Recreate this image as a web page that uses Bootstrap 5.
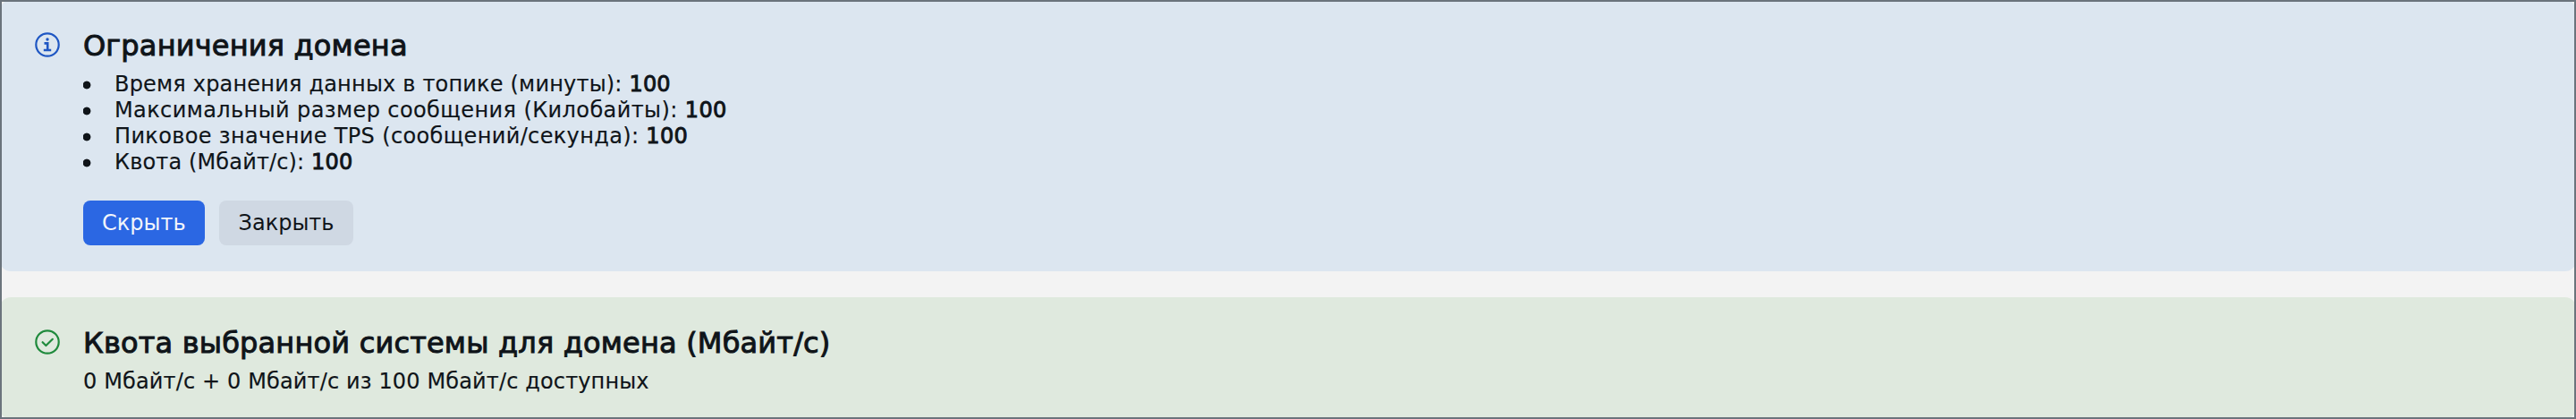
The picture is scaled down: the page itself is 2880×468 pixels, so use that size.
<!DOCTYPE html>
<html lang="ru">
<head>
<meta charset="utf-8">
<title>Ограничения домена</title>
<link href="https://cdn.jsdelivr.net/npm/bootstrap@5.3.0/dist/css/bootstrap.min.css" rel="stylesheet">
<style>
html,body{height:100%;margin:0;background:#f3f3f3;overflow:hidden}
body{font-family:"DejaVu Sans","Noto Sans",sans-serif;color:#0f1419}
.frame{height:468px;outline:2px solid #6b747c;outline-offset:-2px;overflow:hidden;display:flex;flex-direction:column;gap:29px}
.note{border-radius:12px;padding:32px 39px 29px;display:flex;gap:26px;font-size:24px;line-height:29px;letter-spacing:.14px;-webkit-text-stroke:.15px #0f1419}
.note-info{background:#dce6f0}
.note-ok{background:#dfe9de;padding-bottom:0;flex:1}
.note-icon{width:28px;height:28px;flex:none;margin-top:4px}
.note-title{font-size:32px;line-height:38px;font-weight:400;letter-spacing:.18px;-webkit-text-stroke:1px #0f1419;margin:0 0 10px}
.note-list{margin:0 0 28px;padding:0;list-style:none}
.note-list li{padding-left:35px;background:radial-gradient(circle at 4px 15px,#0f1419 4px,transparent 4.8px) no-repeat}
.note-list li:nth-child(1){letter-spacing:.19px}
.note-list li:nth-child(2){letter-spacing:.4px}
.note-list li:nth-child(3){letter-spacing:.35px}
.note-list b{font-weight:400;-webkit-text-stroke:.9px #0f1419}
.act{font-size:24px;line-height:30px;padding:10px 21px;border-radius:8px;border:0;-webkit-text-stroke:0}
.act-main{background:#2b67e3;color:#f2f5fb}
.act-alt{background:#cfd8e3;color:#0f1419;padding:10px 22px}
</style>
</head>
<body>
<div class="frame">
  <div class="note note-info">
    <svg class="note-icon" viewBox="0 0 28 28" fill="none" stroke="#1f57c3" stroke-width="2.2"><circle cx="14" cy="14" r="12.7"/><path d="M10.5 12.4h3.7v7.2M9.8 20h8.4" stroke-width="2.6"/><circle cx="14" cy="8" r="1.7" fill="#1f57c3" stroke="none"/></svg>
    <div>
      <h2 class="note-title">Ограничения домена</h2>
      <ul class="note-list">
        <li>Время хранения данных в топике (минуты): <b>100</b></li>
        <li>Максимальный размер сообщения (Килобайты): <b>100</b></li>
        <li>Пиковое значение TPS (сообщений/секунда): <b>100</b></li>
        <li>Квота (Мбайт/с): <b>100</b></li>
      </ul>
      <div class="d-flex gap-3">
        <button type="button" class="btn act act-main">Скрыть</button>
        <button type="button" class="btn act act-alt">Закрыть</button>
      </div>
    </div>
  </div>
  <div class="note note-ok">
    <svg class="note-icon" viewBox="0 0 28 28" fill="none" stroke="#1f8a3c" stroke-width="2.2"><circle cx="14" cy="14" r="12.7"/><path d="M8.6 14.2l3.8 3.8 7.4-7.2" stroke-linecap="round" stroke-linejoin="round"/></svg>
    <div>
      <h2 class="note-title">Квота выбранной системы для домена (Мбайт/с)</h2>
      <div>0 Мбайт/с + 0 Мбайт/с из 100 Мбайт/с доступных</div>
    </div>
  </div>
</div>
<script src="https://cdn.jsdelivr.net/npm/bootstrap@5.3.0/dist/js/bootstrap.bundle.min.js"></script>
</body>
</html>
